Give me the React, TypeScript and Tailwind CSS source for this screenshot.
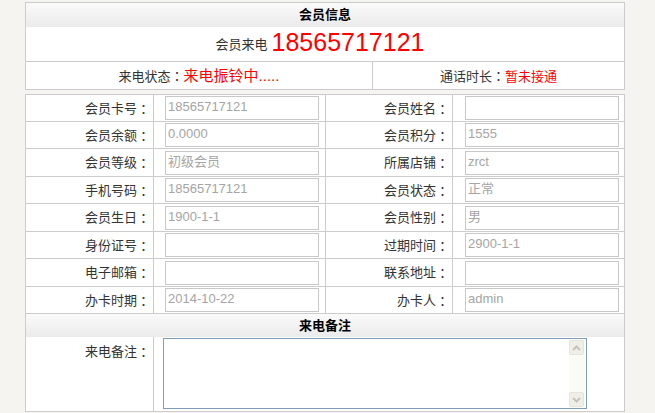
import React from "react";

const cjk = { fontFamily: '"Liberation Sans", "Noto Sans CJK SC", sans-serif' };
const tc = { fontFamily: '"Noto Sans CJK TC", sans-serif' };

type F = { label: string; value: string };
const rows: { h: string; a: F; b: F }[] = [
  { h: "h-[27px]", a: { label: "会员卡号", value: "18565717121" }, b: { label: "会员姓名", value: "" } },
  { h: "h-[27px]", a: { label: "会员余额", value: "0.0000" }, b: { label: "会员积分", value: "1555" } },
  { h: "h-[28px]", a: { label: "会员等级", value: "初级会员" }, b: { label: "所属店铺", value: "zrct" } },
  { h: "h-[27px]", a: { label: "手机号码", value: "18565717121" }, b: { label: "会员状态", value: "正常" } },
  { h: "h-[28px]", a: { label: "会员生日", value: "1900-1-1" }, b: { label: "会员性别", value: "男" } },
  { h: "h-[27px]", a: { label: "身份证号", value: "" }, b: { label: "过期时间", value: "2900-1-1" } },
  { h: "h-[28px]", a: { label: "电子邮箱", value: "" }, b: { label: "联系地址", value: "" } },
  { h: "h-[27px]", a: { label: "办卡时期", value: "2014-10-22" }, b: { label: "办卡人", value: "admin" } },
];

function Colon() {
  return <span style={tc}>：</span>;
}

function Input({ value, ml }: { value: string; ml: string }) {
  return (
    <div className={`${ml} w-[154px] h-[24px] border border-[#c8c8c8] bg-white flex items-start pl-[2px] pt-[2px] text-[13px] leading-[16px] text-[#a5a5a5] overflow-hidden`}>
      {value}
    </div>
  );
}

function Chevron({ up }: { up: boolean }) {
  return (
    <svg width="9" height="6" viewBox="0 0 9 6">
      <path
        d={up ? "M1 5 L4.5 1.5 L8 5" : "M1 1 L4.5 4.5 L8 1"}
        fill="none"
        stroke="#c4c3bc"
        strokeWidth="2"
      />
    </svg>
  );
}

export default function App() {
  return (
    <div className="w-[655px] h-[413px] bg-[#f5f4f0] overflow-hidden text-[#333]" style={cjk}>
      <div className="ml-[25px] w-[600px] pt-[2px]">
        {/* top box */}
        <div className="border border-[#cccccc] bg-white">
          <div className="h-[24px] bg-gradient-to-b from-[#fafafa] to-[#ebebeb] flex items-center justify-center text-[13px] font-bold text-black">
            会员信息
          </div>
          <div className="h-[35px] border-b border-[#cccccc] flex items-end justify-center pb-[6px] pr-[10px]">
            <span className="text-[13px] leading-[16px] text-[#333] mb-[2px]">会员来电</span>
            <span className="text-[25px] leading-[26px] text-[#ff0000] ml-[4px]">18565717121</span>
          </div>
          <div className="h-[27px] flex">
            <div className="w-[347px] border-r border-[#cccccc] flex items-center justify-center pt-[2px]">
              <span className="text-[13px]">来电状态<Colon /></span>
              <span className="text-[15px] text-[#ff0000]">来电振铃中.....</span>
            </div>
            <div className="flex-1 flex items-center justify-center pt-[2px]">
              <span className="text-[13px]">通话时长<Colon /></span>
              <span className="text-[13px] text-[#ff0000]">暂未接通</span>
            </div>
          </div>
        </div>

        {/* second box */}
        <div className="mt-[4px] border border-[#cccccc] bg-white">
          {rows.map((r, i) => (
            <div key={i} className={`flex border-b border-[#cccccc] ${r.h}`}>
              <div className="w-[128px] border-r border-[#cccccc] flex items-center justify-end pr-[3px] pt-[1px] text-[13px]">
                {r.a.label}
                <Colon />
              </div>
              <div className="w-[172px] border-r border-[#cccccc] flex items-center">
                <Input value={r.a.value} ml="ml-[11px]" />
              </div>
              <div className="w-[127px] border-r border-[#cccccc] flex items-center justify-end pr-[3px] pt-[1px] text-[13px]">
                {r.b.label}
                <Colon />
              </div>
              <div className="flex-1 flex items-center">
                <Input value={r.b.value} ml="ml-[12px]" />
              </div>
            </div>
          ))}
          <div className="h-[23px] bg-gradient-to-b from-[#fafafa] to-[#ebebeb] flex items-center justify-center text-[13px] font-bold text-black">
            来电备注
          </div>
          <div className="flex h-[74px]">
            <div className="w-[128px] border-r border-[#cccccc] flex justify-end pr-[3px] pt-[5px] text-[13px]">
              来电备注
              <Colon />
            </div>
            <div className="flex-1 pt-[1px] pl-[9px]">
              <div className="w-[424px] h-[71px] border border-[#7f9db9] bg-white flex justify-end">
                <div className="w-[16px] h-full bg-[#fbfbf6] flex flex-col justify-between py-[1px] mr-[1px]">
                  <div className="h-[15px] w-[15px] bg-[#efeee8] border border-[#e4e3dc] rounded-[2px] flex items-center justify-center">
                    <Chevron up />
                  </div>
                  <div className="h-[15px] w-[15px] bg-[#efeee8] border border-[#e4e3dc] rounded-[2px] flex items-center justify-center">
                    <Chevron up={false} />
                  </div>
                </div>
              </div>
            </div>
          </div>
        </div>
      </div>
    </div>
  );
}
